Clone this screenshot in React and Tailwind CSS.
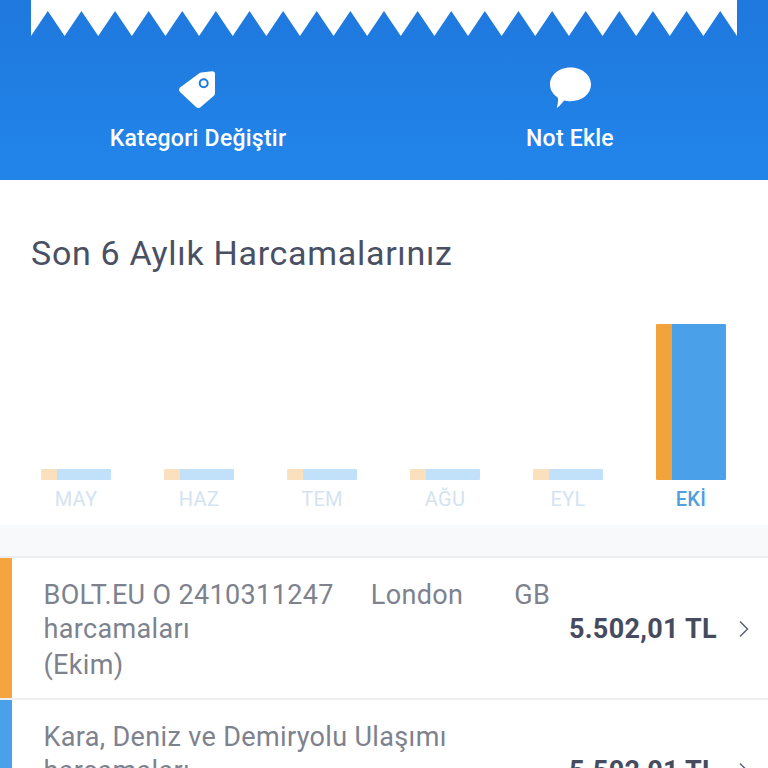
const months = [
  { label: "MAY", h: "h-[11px]" },
  { label: "HAZ", h: "h-[11px]" },
  { label: "TEM", h: "h-[11px]" },
  { label: "AĞU", h: "h-[11px]" },
  { label: "EYL", h: "h-[11px]" },
  { label: "EKİ", h: "h-[156px]", active: true },
];

function Zigzag() {
  const n = 21;
  const w = 706;
  const p = w / n;
  let d = "M0 0 L0 25 ";
  for (let i = 0; i < n; i++) {
    d += `L${(i + 0.5) * p} 0 L${(i + 1) * p} 25 `;
  }
  d += `L${w} 0 Z`;
  return (
    <svg width="706" height="26" viewBox="0 0 706 26" className="block">
      <path d={d} fill="#fff" />
    </svg>
  );
}

function Bar({ h, active }) {
  return (
    <div className={`flex w-[70px] overflow-hidden rounded-[1px] ${h}`}>
      <div className={`w-[15.5px] ${active ? "bg-[#f3a33c]" : "bg-[#fae0bd]"}`} />
      <div className={`flex-1 ${active ? "bg-[#4aa1ea]" : "bg-[#c1e1fb]"}`} />
    </div>
  );
}

function Row({ color, lines, amount }) {
  return (
    <div className="flex h-[142px] border-b-2 border-[#eeeff1] bg-white">
      <div className={`w-3 ${color}`} />
      <div className="flex flex-1 items-center pr-[18px] pl-[31.5px]">
        <div className="flex-1 self-start pt-[20px] text-[27px] leading-[34px] tracking-[0.35px] whitespace-pre text-[#7d828e]">
          {lines.map((l, i) => (
            <div key={i} className={i === 2 ? "mt-[2px]" : ""}>
              {l}
            </div>
          ))}
        </div>
        <div className="pt-[2px] text-[27px] font-bold tracking-[0.3px] text-[#464c5e]">{amount}</div>
        <svg width="12" height="18" viewBox="0 0 12 18" className="mt-[2px] ml-[21px]" fill="none">
          <path d="M2 1.5 L9.5 9 L2 16.5" stroke="#5d6373" strokeWidth="1.5" />
        </svg>
      </div>
    </div>
  );
}

export default function App() {
  return (
    <div className="h-[768px] w-[768px] overflow-hidden bg-white font-['Roboto',sans-serif]">
      <div className="h-[180px] bg-gradient-to-b from-[#1f78dd] to-[#2285ea]">
        <div className="mx-[31px]">
          <div className="h-[11px] bg-white" />
          <Zigzag />
        </div>
        <div className="grid grid-cols-2 px-3 pt-[30px] text-white">
          <div className="flex flex-col items-center">
            <svg width="38" height="38" viewBox="0 0 38 38" className="mt-1 block">
              <path
                fill="#fff"
                d="M1 16.5 L20 2.5 Q21 1.7 22.5 1.5 L33 0.2 Q36 0 36 3 L36 22 Q36 24 34 25.5 L21.5 36.2 Q19 38 17 36 L1 21 Q-0.8 18.5 1 16.5 Z"
              />
              <circle cx="24.7" cy="12.3" r="4" fill="none" stroke="#1f79df" strokeWidth="2" />
            </svg>
            <div className="mt-[16px] text-[23px] leading-[28px] font-medium tracking-[0.25px]">Kategori Değiştir</div>
          </div>
          <div className="flex flex-col items-center">
            <svg width="43" height="42" viewBox="0 0 44 43" className="block">
              <path
                fill="#fff"
                d="M22 0.5 C33.5 0.5 43 8 43 18 C43 28 33.5 35 22 35 C20 35 17.5 34.8 15.5 34.2 C13 37 11 40 8 42 C9 38 9.6 34 9 31.5 C4 28 1 23.5 1 18 C1 8 10.5 0.5 22 0.5 Z"
              />
            </svg>
            <div className="mt-[16px] text-[23px] leading-[28px] font-medium tracking-[0.25px]">Not Ekle</div>
          </div>
        </div>
      </div>

      <div className="h-[345px] pt-[52px] pr-[31px] pl-[31px]">
        <h2 className="text-[34px] leading-[42px] tracking-[0.7px] text-[#4a5064]">Son 6 Aylık Harcamalarınız</h2>
        <div className="mt-[50px] ml-[10px] flex h-[156px] items-end gap-[53px]">
          {months.map((m) => (
            <Bar key={m.label} h={m.h} active={m.active} />
          ))}
        </div>
        <div className="ml-[10px] flex gap-[53px]">
          {months.map((m) => (
            <div
              key={m.label}
              className={`w-[70px] pt-[6px] text-center text-[20px] leading-[27px] tracking-[0.3px] ${m.active ? "font-medium text-[#519fdd]" : "text-[#d3e3f1]"}`}
            >
              {m.label}
            </div>
          ))}
        </div>
      </div>

      <div className="h-[33px] border-b-2 border-[#eceef1] bg-[#f8f9fb]" />

      <Row
        color="bg-[#f5a53f]"
        lines={[
          <>
            BOLT.EU O 2410311247<span className="ml-[37px]">London</span>
            <span className="ml-[51px]">GB</span>
          </>,
          "harcamaları",
          "(Ekim)",
        ]}
        amount="5.502,01 TL"
      />
      <Row
        color="bg-[#4aa1ea]"
        lines={["Kara, Deniz ve Demiryolu Ulaşımı", "harcamaları"]}
        amount="5.502,01 TL"
      />
    </div>
  );
}
